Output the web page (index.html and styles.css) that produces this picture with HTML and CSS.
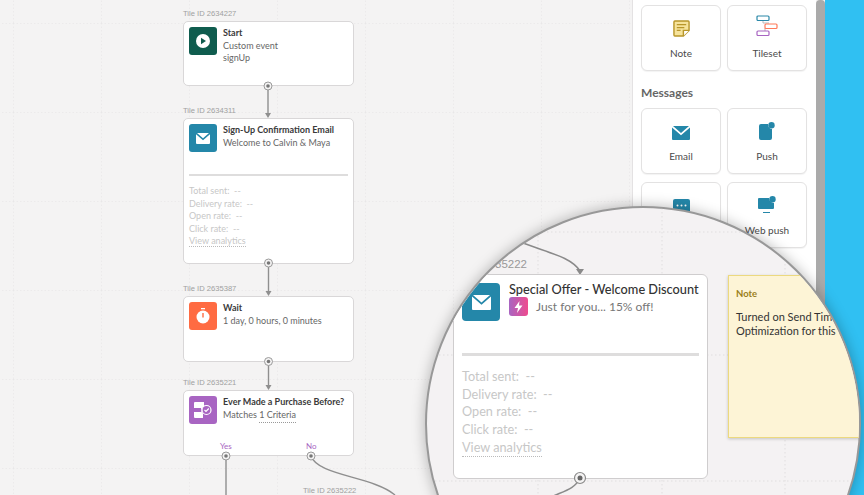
FILE: index.html
```html
<!DOCTYPE html>
<html lang="en">
<head>
  <meta charset="UTF-8" />
  <meta name="viewport" content="width=device-width, initial-scale=1.0" />
  <title>Canvas Flow Builder</title>
  <link rel="stylesheet" href="styles.css">
</head>
<body>
  <div class="stage">
    <!-- Flow canvas: nodes sit at their own places on it -->
    <main class="canvas">
      <svg class="canvas-grid" width="632" height="495">
        <defs>
          <pattern id="grid" x="13" y="23" width="88" height="89" patternUnits="userSpaceOnUse">
            <path d="M0 0H88M0 0V89" fill="none" stroke="#e4e2e3" stroke-width="1" stroke-dasharray="1.5 2" />
          </pattern>
        </defs>
        <rect width="632" height="495" fill="url(#grid)" />
      </svg>

      <svg class="canvas-lines" width="632" height="495">
        <g fill="none" stroke="#8f8f8f" stroke-width="1.4">
          <path d="M268 86V114" />
          <path d="M268.500 264V292" />
          <path d="M268.500 362V386" />
          <path d="M226 456V495" />
          <path d="M311 456C318 476 372 476 395 495" />
        </g>
        <g fill="#8f8f8f">
          <path d="M265 113H271L268 118Z" />
          <path d="M265.500 291H271.500L268.500 296Z" />
          <path d="M265.500 385H271.500L268.500 390Z" />
        </g>
        <g fill="#f4f3f3" stroke="#9a9a9a">
          <circle cx="268" cy="86" r="4" />
          <circle cx="268.500" cy="263" r="4" />
          <circle cx="268.500" cy="361.500" r="4" />
          <circle cx="226" cy="456" r="4" />
          <circle cx="311" cy="456" r="4" />
        </g>
        <g fill="#777">
          <circle cx="268" cy="86" r="1.800" />
          <circle cx="268.500" cy="263" r="1.800" />
          <circle cx="268.500" cy="361.500" r="1.800" />
          <circle cx="226" cy="456" r="1.800" />
          <circle cx="311" cy="456" r="1.800" />
        </g>
      </svg>

      <span class="tile-id tile-id-start">Tile ID 2634227</span>
      <article class="node node-start">
        <div class="node-icon icon-green">
          <svg width="16" height="16" viewBox="0 0 16 16"><circle cx="8" cy="8" r="7" fill="#fff" /><path d="M6 4.800L11 8L6 11.200Z" fill="#0f5c4e" /></svg>
        </div>
        <div class="node-text">
          <h3>Start</h3>
          <p>Custom event</p>
          <p>signUp</p>
        </div>
      </article>

      <span class="tile-id tile-id-email">Tile ID 2634311</span>
      <article class="node node-email">
        <div class="node-head">
          <div class="node-icon icon-blue">
            <svg width="14" height="11" viewBox="0 0 14 11"><path d="M1 0H13L7 5.200ZM0 1.200L7 7.200L14 1.200V10A1 1 0 0 1 13 11H1A1 1 0 0 1 0 10Z" fill="#fff" /></svg>
          </div>
          <div class="node-text">
            <h3>Sign-Up Confirmation Email</h3>
            <p>Welcome to Calvin &amp; Maya</p>
          </div>
        </div>
        <div class="stats">
          <div>Total sent: &nbsp;--</div>
          <div>Delivery rate: &nbsp;--</div>
          <div>Open rate: &nbsp;--</div>
          <div>Click rate: &nbsp;--</div>
          <div><span class="analytics">View analytics</span></div>
        </div>
      </article>

      <span class="tile-id tile-id-wait">Tile ID 2635387</span>
      <article class="node node-wait">
        <div class="node-icon icon-orange">
          <svg width="14" height="16" viewBox="0 0 14 16"><path d="M5 0H9V1.300H5Z" fill="#fff" /><circle cx="7" cy="9" r="6.500" fill="#fff" /><path d="M6.300 5H7.700V9.500H6.300Z" fill="#ff6b42" /></svg>
        </div>
        <div class="node-text">
          <h3>Wait</h3>
          <p>1 day, 0 hours, 0 minutes</p>
        </div>
      </article>

      <span class="tile-id tile-id-decision">Tile ID 2635221</span>
      <article class="node node-decision">
        <div class="node-icon icon-purple">
          <svg width="18" height="16" viewBox="0 0 18 16"><path d="M1 0H10V4.500A4 4 0 0 0 9 11.500V16H1A1 1 0 0 1 0 15V10H7V6H0V1A1 1 0 0 1 1 0Z" fill="#fff" /><circle cx="12.500" cy="8" r="4.500" fill="none" stroke="#fff" stroke-width="1.200" /><path d="M10.500 8L12 9.500L14.800 6.500" fill="none" stroke="#fff" stroke-width="1.200" /></svg>
        </div>
        <div class="node-text">
          <h3>Ever Made a Purchase Before?</h3>
          <p>Matches <span class="criteria">1 Criteria</span></p>
        </div>
      </article>
      <span class="branch branch-yes">Yes</span>
      <span class="branch branch-no">No</span>
      <span class="tile-id tile-id-next">Tile ID 2635222</span>
    </main>

    <!-- Tile library -->
    <aside class="panel">
      <div class="tile-grid">
        <div class="tile">
          <svg width="17" height="17" viewBox="0 0 18 18"><path d="M2 1H16A1 1 0 0 1 17 2V11L11 17H2A1 1 0 0 1 1 16V2A1 1 0 0 1 2 1Z" fill="#f6e39b" stroke="#b8962a" stroke-width="1.500" /><path d="M17 11H11V17" fill="#fff" stroke="#b8962a" stroke-width="1.500" /><path d="M4 5H14M4 8H12M4 11H8" stroke="#b8962a" stroke-width="1.300" /></svg>
          <span>Note</span>
        </div>
        <div class="tile">
          <svg width="22" height="22" viewBox="0 0 22 22"><path d="M7 5V8H13M13 13H9V16" fill="none" stroke="#b9b9b9" /><rect x="1" y="1" width="12" height="4.500" rx="1" fill="#fff" stroke="#2a88a8" stroke-width="1.200" /><rect x="9" y="9" width="12" height="4.500" rx="1" fill="#fff" stroke="#ff7a59" stroke-width="1.200" /><rect x="1" y="16" width="12" height="4.500" rx="1" fill="#fff" stroke="#a865c2" stroke-width="1.200" /></svg>
          <span>Tileset</span>
        </div>
      </div>
      <h2 class="panel-title">Messages</h2>
      <div class="tile-grid">
        <div class="tile">
          <svg width="18" height="14" viewBox="0 0 18 14"><path d="M1 0H17L9 7ZM0 1.500L9 9.200L18 1.500V13A1 1 0 0 1 17 14H1A1 1 0 0 1 0 13Z" fill="#2487a9" /></svg>
          <span>Email</span>
        </div>
        <div class="tile">
          <svg width="16" height="18" viewBox="0 0 16 18"><path d="M2 2H9A5 5 0 0 0 13 7V16A2 2 0 0 1 11 18H2A2 2 0 0 1 0 16V4A2 2 0 0 1 2 2Z" fill="#2487a9" /><circle cx="12.500" cy="3.200" r="3.200" fill="#2487a9" /></svg>
          <span>Push</span>
        </div>
        <!-- label of this tile is hidden under the lens -->
        <div class="tile">
          <svg width="17" height="15" viewBox="0 0 17 15"><rect width="17" height="15" rx="2" fill="#2487a9" /><circle cx="4.500" cy="6.500" r="1" fill="#fff" /><circle cx="8.500" cy="6.500" r="1" fill="#fff" /><circle cx="12.500" cy="6.500" r="1" fill="#fff" /></svg>
          <span></span>
        </div>
        <div class="tile">
          <svg width="18" height="18" viewBox="0 0 18 18"><path d="M1 2H11A5 5 0 0 0 16 7V12A1 1 0 0 1 15 13H1A1 1 0 0 1 0 12V3A1 1 0 0 1 1 2ZM5 16H12V17H5Z" fill="#2487a9" /><circle cx="14.500" cy="3.200" r="3.200" fill="#2487a9" /></svg>
          <span>Web push</span>
        </div>
      </div>
    </aside>

    <div class="scrollbar"></div>
    <div class="backdrop"></div>

    <!-- Magnified part of the flow, over everything -->
    <section class="lens">
      <svg class="lens-grid" width="436" height="436">
        <g fill="none" stroke="#e0dedf" stroke-dasharray="1.500 2.500">
          <path d="M0 24H436M0 147H436M0 273H436" />
          <path d="M111 0V436M235 0V436M358 0V436" />
        </g>
      </svg>
      <svg class="lens-lines" width="436" height="436">
        <g fill="none" stroke="#8a8a8a" stroke-width="1.500">
          <path d="M96 35C122 45 144 49 153 63" />
          <path d="M153 270C148 281 137 283 124 289" />
        </g>
        <path d="M149 61H157L153 67Z" fill="#8a8a8a" />
      </svg>
      <span class="lens-tile-id">Tile ID 2635222</span>
      <article class="lens-card">
        <div class="lens-head">
          <div class="lens-icon">
            <svg width="19" height="15" viewBox="0 0 19 15"><path d="M1 0H18L9.500 7.500ZM0 1.500L9.500 9.800L19 1.500V14A1 1 0 0 1 18 15H1A1 1 0 0 1 0 14Z" fill="#fff" /></svg>
          </div>
          <div class="lens-text">
            <h3>Special Offer - Welcome Discount</h3>
            <div class="lens-sub">
              <span class="bolt">
                <svg width="9" height="12" viewBox="0 0 9 12"><path d="M5.500 0L0.500 7H4L3 12L8.500 4.500H5Z" fill="#fff" /></svg>
              </span>
              <p>Just for you... 15% off!</p>
            </div>
          </div>
        </div>
        <div class="lens-stats">
          <div>Total sent: &nbsp;--</div>
          <div>Delivery rate: &nbsp;--</div>
          <div>Open rate: &nbsp;--</div>
          <div>Click rate: &nbsp;--</div>
          <div><span class="lens-analytics">View analytics</span></div>
        </div>
      </article>
      <svg class="lens-port" width="14" height="14">
        <circle cx="7" cy="7" r="5.500" fill="#f4f3f3" stroke="#8a8a8a" stroke-width="1.200" />
        <circle cx="7" cy="7" r="2.500" fill="#666" />
      </svg>
      <aside class="lens-note">
        <h4>Note</h4>
        <p>Turned on Send Time<br>Optimization for this tile</p>
      </aside>
    </section>
  </div>
</body>
</html>
```

FILE: styles.css
```css
* {
  box-sizing: border-box;
}

body {
  margin: 0;
  padding: 0;
  font-family: Lato, "Open Sans", sans-serif;
  overflow: hidden;
}

h2,
h3,
h4,
p {
  margin: 0;
}

.stage {
  position: relative;
  display: flex;
  width: 864px;
  height: 495px;
  overflow: hidden;
  background-color: #f4f3f3;
}

/* Canvas */

.canvas {
  position: relative;
  flex: 0 0 632px;
  height: 495px;
}

.canvas-grid,
.canvas-lines {
  position: absolute;
  left: 0;
  top: 0;
}

.canvas-lines {
  z-index: 1;
}

.tile-id {
  position: absolute;
  font-family: "Liberation Sans", Arial, sans-serif;
  font-size: 7.600px;
  line-height: 10px;
  color: #a0a0a0;
}

.tile-id-start { left: 183px; top: 9px; }
.tile-id-email { left: 183px; top: 106px; }
.tile-id-wait { left: 183px; top: 284px; }
.tile-id-decision { left: 183px; top: 378px; }
.tile-id-next { left: 303px; top: 486px; }

.node {
  position: absolute;
  left: 183px;
  width: 171px;
  padding: 5px;
  display: flex;
  gap: 6px;
  align-items: flex-start;
  background-color: #fff;
  border: 1px solid #d9d7d8;
  border-radius: 5px;
}

.node-start { top: 21px; height: 65px; }
.node-email { top: 118px; height: 146px; display: block; }
.node-wait { top: 296px; height: 66px; }
.node-decision { top: 390px; height: 66px; }

.node-head {
  display: flex;
  gap: 6px;
}

.node-icon {
  flex: 0 0 28px;
  height: 28px;
  display: flex;
  align-items: center;
  justify-content: center;
  border-radius: 3px;
}

.icon-green { background-color: #0f5c4e; }
.icon-blue { background-color: #2487a9; }
.icon-orange { background-color: #ff6b42; }
.icon-purple { background-color: #a865c2; }

.node-text {
  font-size: 9px;
  line-height: 12.500px;
  color: #666;
}

.node-text h3 {
  font-size: 9px;
  font-weight: 700;
  color: #3a3a3a;
}

.criteria {
  padding-bottom: 2px;
  border-bottom: 1px dotted #999;
}

.stats {
  margin-top: 22px;
  padding-top: 9px;
  border-top: 2px solid #dedddd;
  font-size: 9px;
  line-height: 12.600px;
  color: #c7c7c7;
}

.analytics {
  border-bottom: 1px dotted #bbb;
}

.branch {
  position: absolute;
  font-size: 8px;
  line-height: 10px;
  color: #a865c2;
}

.branch-yes { left: 220px; top: 441px; }
.branch-no { left: 306px; top: 441px; }

/* Library panel */

.panel {
  flex: 0 0 184px;
  height: 495px;
  padding: 5px 9px 0 8px;
  background-color: #fff;
  border-left: 1px solid #e4e2e3;
}

.tile-grid {
  display: grid;
  grid-template-columns: 80px 80px;
  grid-auto-rows: 66px;
  gap: 8px 6px;
}

.tile {
  display: flex;
  flex-direction: column;
  align-items: center;
  justify-content: flex-end;
  gap: 10px;
  padding-bottom: 11px;
  font-size: 10px;
  line-height: 12px;
  color: #4a4a4a;
  background-color: #fff;
  border: 1px solid #e3e2e2;
  border-radius: 6px;
  box-shadow: 0 1px 1px rgba(0, 0, 0, 0.05);
}

.tile span {
  min-height: 12px;
}

.panel-title {
  margin: 14px 0 7px;
  font-size: 12px;
  line-height: 16px;
  font-weight: 700;
  color: #666;
}

.scrollbar {
  flex: 0 0 9px;
  height: 495px;
  background-color: #aaa;
  border-radius: 4px 4px 0 0;
}

.backdrop {
  flex: 1;
  background-color: #30c0f2;
}

/* Lens */

.lens {
  position: absolute;
  left: 425px;
  top: 206px;
  width: 436px;
  height: 436px;
  overflow: hidden;
  background-color: #f4f2f3;
  border: 2px solid #989898;
  border-radius: 50%;
  box-shadow: 0 0 14px rgba(0, 0, 0, 0.28);
}

.lens-grid,
.lens-lines {
  position: absolute;
  left: 0;
  top: 0;
}

.lens-tile-id {
  position: absolute;
  right: 332px;
  top: 49px;
  font-family: "Liberation Sans", Arial, sans-serif;
  font-size: 11.500px;
  line-height: 14px;
  color: #999;
}

.lens-card {
  position: absolute;
  left: 26px;
  top: 66px;
  width: 255px;
  height: 205px;
  padding: 8px 8px 0 8px;
  background-color: #fff;
  border: 1px solid #cfcdce;
  border-radius: 6px;
}

.lens-head {
  display: flex;
  gap: 9px;
}

.lens-icon {
  flex: 0 0 38px;
  height: 38px;
  display: flex;
  align-items: center;
  justify-content: center;
  background-color: #2487a9;
  border-radius: 4px;
}

.lens-text {
  margin-top: -1px;
}

.lens-text h3 {
  font-size: 12.750px;
  line-height: 15px;
  font-weight: 500;
  color: #333;
  white-space: nowrap;
}

.lens-sub {
  display: flex;
  align-items: center;
  gap: 8px;
}

.lens-sub p {
  font-size: 12px;
  line-height: 18px;
  color: #777;
}

.bolt {
  display: flex;
  align-items: center;
  justify-content: center;
  width: 19px;
  height: 19px;
  background: linear-gradient(90deg, #a865c2, #ef4b8e);
  border-radius: 3px;
}

.lens-stats {
  margin-top: 32px;
  padding-top: 12px;
  border-top: 3px solid #dedddd;
  font-size: 12.700px;
  line-height: 17.700px;
  color: #c7c7c7;
}

.lens-analytics {
  padding-bottom: 1px;
  border-bottom: 1.500px dotted #bbb;
}

.lens-port {
  position: absolute;
  left: 146px;
  top: 263px;
}

.lens-note {
  position: absolute;
  left: 301px;
  top: 67px;
  width: 160px;
  height: 163px;
  padding: 12px 7px;
  background-color: #fdf4d6;
  border: 1px solid #ecd97f;
  box-shadow: 0 1px 3px rgba(0, 0, 0, 0.2);
}

.lens-note h4 {
  font-size: 9.500px;
  line-height: 12px;
  font-weight: 700;
  color: #9a7f1a;
}

.lens-note p {
  margin-top: 10px;
  font-size: 11px;
  line-height: 14px;
  color: #333;
}
```
